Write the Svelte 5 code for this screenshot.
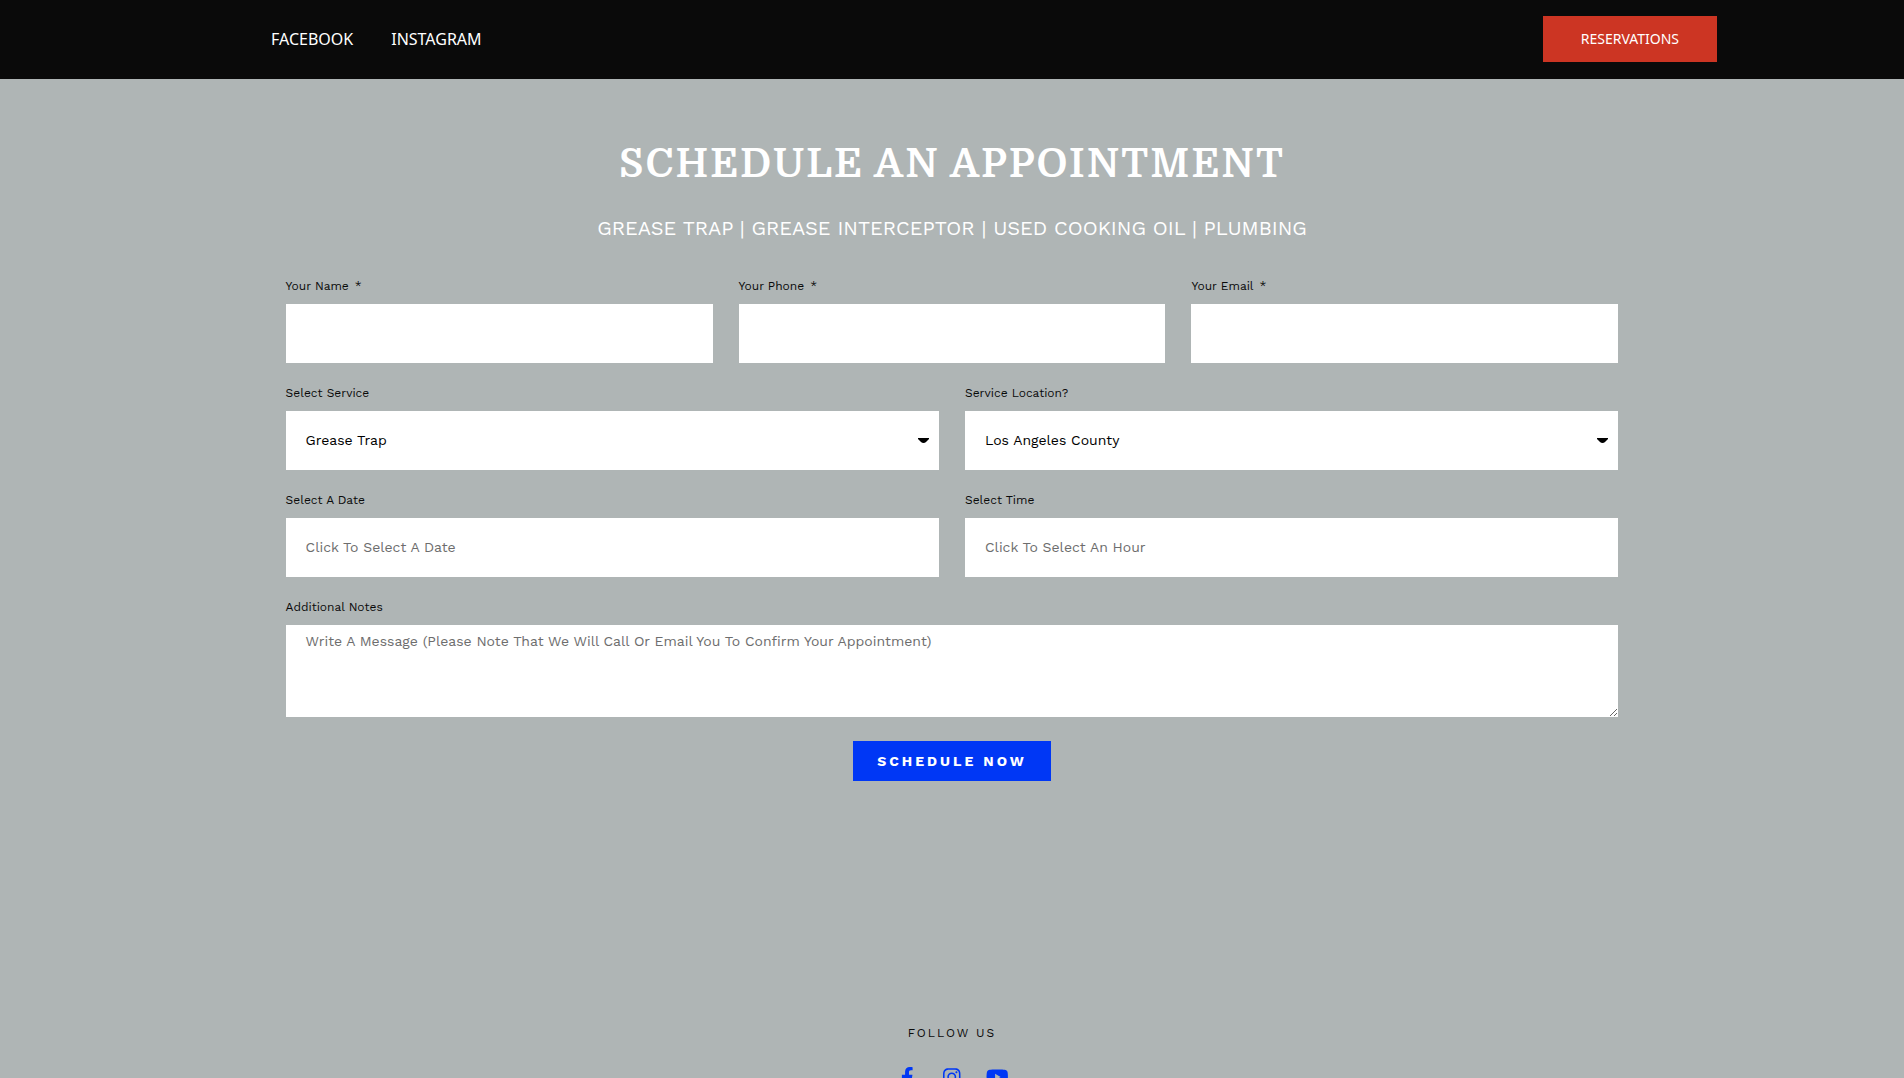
<script lang="ts">
  const contactFields = [
    { id: 'name', label: 'Your Name', type: 'text' },
    { id: 'phone', label: 'Your Phone', type: 'tel' },
    { id: 'email', label: 'Your Email', type: 'email' },
  ];

  const selects = [
    {
      id: 'service',
      label: 'Select Service',
      options: ['Grease Trap', 'Grease Interceptor', 'Used Cooking Oil', 'Plumbing'],
    },
    {
      id: 'location',
      label: 'Service Location?',
      options: ['Los Angeles County', 'Orange County'],
    },
  ];

  const pickers = [
    { id: 'date', label: 'Select A Date', placeholder: 'Click To Select A Date' },
    { id: 'time', label: 'Select Time', placeholder: 'Click To Select An Hour' },
  ];

  const socials = [
    {
      name: 'Facebook',
      viewBox: '0 0 320 512',
      path: 'M279.14 288l14.22-92.66h-88.91v-60.13c0-25.35 12.42-50.06 52.24-50.06h40.42V6.26S260.43 0 225.36 0c-73.22 0-121.08 44.38-121.08 124.72v70.62H22.89V288h81.39v224h100.17V288z',
    },
    {
      name: 'Instagram',
      viewBox: '0 0 448 512',
      path: 'M224.1 141c-63.6 0-114.9 51.3-114.9 114.9s51.3 114.9 114.9 114.9S339 319.5 339 255.9 287.7 141 224.1 141zm0 189.6c-41.1 0-74.7-33.5-74.7-74.7s33.5-74.7 74.7-74.7 74.7 33.5 74.7 74.7-33.6 74.7-74.7 74.7zm146.4-194.3c0 14.9-12 26.8-26.8 26.8-14.9 0-26.8-12-26.8-26.8s12-26.8 26.8-26.8 26.8 12 26.8 26.8zm76.1 27.2c-1.7-35.9-9.9-67.7-36.2-93.9-26.2-26.2-58-34.4-93.9-36.2-37-2.1-147.9-2.1-184.9 0-35.8 1.7-67.6 9.9-93.9 36.1s-34.4 58-36.2 93.9c-2.1 37-2.1 147.9 0 184.9 1.7 35.9 9.9 67.7 36.2 93.9s58 34.4 93.9 36.2c37 2.1 147.9 2.1 184.9 0 35.9-1.7 67.7-9.9 93.9-36.2 26.2-26.2 34.4-58 36.2-93.9 2.1-37 2.1-147.8 0-184.8zM398.8 388c-7.8 19.6-22.9 34.7-42.6 42.6-29.5 11.7-99.5 9-132.1 9s-102.7 2.6-132.1-9c-19.6-7.8-34.7-22.9-42.6-42.6-11.7-29.5-9-99.5-9-132.1s-2.6-102.7 9-132.1c7.8-19.6 22.9-34.7 42.6-42.6 29.5-11.7 99.5-9 132.1-9s102.7-2.6 132.1 9c19.6 7.8 34.7 22.9 42.6 42.6 11.7 29.5 9 99.5 9 132.1s2.7 102.7-9 132.1z',
    },
    {
      name: 'YouTube',
      viewBox: '0 0 576 512',
      path: 'M549.655 124.083c-6.281-23.65-24.787-42.276-48.284-48.597C458.781 64 288 64 288 64S117.22 64 74.629 75.486c-23.497 6.322-42.003 24.947-48.284 48.597-11.412 42.867-11.412 132.305-11.412 132.305s0 89.438 11.412 132.305c6.281 23.65 24.787 41.5 48.284 47.821C117.22 448 288 448 288 448s170.78 0 213.371-11.486c23.497-6.321 42.003-24.171 48.284-47.821 11.412-42.867 11.412-132.305 11.412-132.305s0-89.438-11.412-132.305zm-317.51 213.508V175.185l142.739 81.205-142.739 81.201z',
    },
  ];
</script>

<header class="topbar">
  <nav>
    <a href="#facebook">FACEBOOK</a>
    <a href="#instagram">INSTAGRAM</a>
  </nav>
  <a class="reservations" href="#schedule">RESERVATIONS</a>
</header>

<main>
  <h1>SCHEDULE AN APPOINTMENT</h1>
  <h2>GREASE TRAP | GREASE INTERCEPTOR | USED COOKING OIL | PLUMBING</h2>

  <form id="schedule" onsubmit={(e) => e.preventDefault()}>
    <div class="row">
      {#each contactFields as field}
        <div class="field">
          <label for={field.id}>{field.label}<span class="required">*</span></label>
          <input id={field.id} type={field.type} required />
        </div>
      {/each}
    </div>

    <div class="row">
      {#each selects as field}
        <div class="field">
          <label for={field.id}>{field.label}</label>
          <div class="select-wrap">
            <select id={field.id}>
              {#each field.options as option}
                <option>{option}</option>
              {/each}
            </select>
            <svg class="caret" viewBox="0 0 11 5" aria-hidden="true">
              <path d="M0 0H11V1L8 4Q7 5 5.5 5T3 4L0 1Z" />
            </svg>
          </div>
        </div>
      {/each}
    </div>

    <div class="row">
      {#each pickers as field}
        <div class="field">
          <label for={field.id}>{field.label}</label>
          <input id={field.id} type="text" placeholder={field.placeholder} />
        </div>
      {/each}
    </div>

    <div class="row">
      <div class="field">
        <label for="notes">Additional Notes</label>
        <textarea
          id="notes"
          placeholder="Write A Message (Please Note That We Will Call Or Email You To Confirm Your Appointment)"
        ></textarea>
      </div>
    </div>

    <button type="submit">SCHEDULE NOW</button>
  </form>
</main>

<footer>
  <p>FOLLOW US</p>
  <div class="socials">
    {#each socials as social}
      <a href="#{social.name.toLowerCase()}" aria-label={social.name}>
        <svg viewBox={social.viewBox} aria-hidden="true"><path d={social.path} /></svg>
      </a>
    {/each}
  </div>
</footer>

<style>
  :global(body) {
    margin: 0;
    background: #afb5b5;
    font-family: 'Work Sans', Inter, 'Liberation Sans', sans-serif;
  }
  .topbar {
    display: flex;
    align-items: center;
    justify-content: space-between;
    padding: 16px 187px 17px 271px;
    background: #0a0a0a;
    font-family: 'Noto Sans', 'Open Sans', sans-serif;
  }
  .topbar a {
    color: #fff;
    text-decoration: none;
  }
  nav {
    display: flex;
    gap: 38px;
    font-size: 16px;
  }
  .topbar .reservations {
    padding: 0 38px;
    background: #cc3523;
    font-size: 14px;
    line-height: 46px;
  }
  main {
    width: 70%;
    margin: 0 auto;
    padding-top: 57px;
    text-align: center;
  }
  h1,
  h2 {
    margin: 0;
    color: #fff;
  }
  h1 {
    font-family: Domine, 'Noto Serif', 'DejaVu Serif Condensed', serif;
    font-size: 40px;
    font-weight: 700;
    line-height: 56px;
    letter-spacing: 2px;
  }
  h2 {
    margin-top: 23px;
    font-size: 20px;
    font-weight: 400;
    line-height: 26px;
  }
  form {
    margin-top: 36px;
  }
  .row {
    display: flex;
    gap: 26px;
    margin-bottom: 21px;
  }
  .row:last-of-type {
    margin-bottom: 24px;
  }
  .field {
    flex: 1;
    min-width: 0;
    text-align: left;
  }
  label {
    display: block;
    margin-bottom: 9px;
    color: #0a0a0a;
    font-size: 12px;
    line-height: 18px;
  }
  .required {
    margin-left: 6px;
  }
  input,
  select,
  textarea {
    display: block;
    box-sizing: border-box;
    width: 100%;
    margin: 0;
    border: 0;
    border-radius: 0;
    background: #fff;
    color: #000;
    font-family: inherit;
    font-size: 14px;
  }
  input,
  select {
    height: 59px;
    padding: 0 20px 2px;
  }
  select {
    appearance: none;
  }
  textarea {
    height: 92px;
    padding: 6px 20px;
    line-height: 20px;
    resize: vertical;
  }
  ::placeholder {
    color: #6d6d6d;
    opacity: 1;
  }
  .select-wrap {
    position: relative;
  }
  .caret {
    position: absolute;
    top: 27px;
    right: 10px;
    width: 11px;
    height: 5px;
    pointer-events: none;
  }
  button {
    padding: 0 24px;
    border: 0;
    background: #0037f5;
    color: #fff;
    font-family: inherit;
    font-size: 14px;
    font-weight: 700;
    line-height: 40px;
    letter-spacing: 3px;
  }
  footer {
    padding: 243px 0 40px;
    text-align: center;
  }
  footer p {
    margin: 0;
    color: #0a0a0a;
    font-size: 12px;
    line-height: 18px;
    letter-spacing: 2px;
  }
  .socials {
    display: flex;
    justify-content: center;
    margin-top: 25px;
  }
  .socials a {
    display: flex;
    justify-content: center;
    width: 45px;
  }
  .socials svg {
    height: 20px;
    fill: #0037f5;
  }
</style>
